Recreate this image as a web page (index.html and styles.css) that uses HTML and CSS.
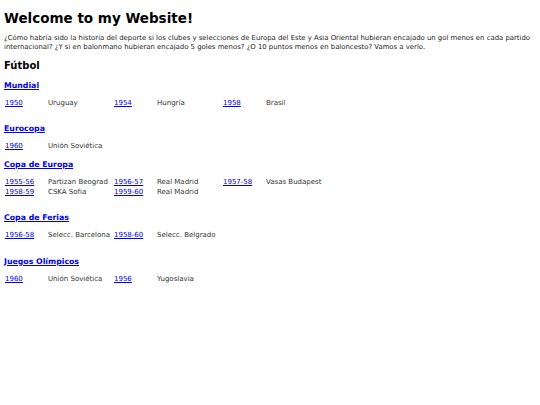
FILE: index.html
```html
<!DOCTYPE html>
<html lang="es">
<head>
<meta charset="utf-8">
<title>Welcome to my Website!</title>
<link rel="stylesheet" href="styles.css">
</head>
<body>
<h1 class="title">Welcome to my Website!</h1>
<p class="intro">¿Cómo habría sido la historia del deporte si los clubes y selecciones de Europa del Este y Asia Oriental hubieran encajado un gol menos en cada partido internacional? ¿Y si en balonmano hubieran encajado 5 goles menos? ¿O 10 puntos menos en baloncesto? Vamos a verlo.</p>
<h2 class="sport">Fútbol</h2>

<section class="comp">
  <h3 class="comp-title"><a href="#">Mundial</a></h3>
  <table class="results">
    <colgroup><col class="c-year"><col class="c-team"><col class="c-year"><col class="c-team"><col class="c-year"><col class="c-team"></colgroup>
    <tr><td class="year"><a href="#">1950</a></td><td>Uruguay</td><td class="year"><a href="#">1954</a></td><td>Hungría</td><td class="year"><a href="#">1958</a></td><td>Brasil</td></tr>
  </table>
</section>

<section class="comp compact">
  <h3 class="comp-title"><a href="#">Eurocopa</a></h3>
  <table class="results">
    <colgroup><col class="c-year"><col class="c-team"><col class="c-year"><col class="c-team"><col class="c-year"><col class="c-team"></colgroup>
    <tr><td class="year"><a href="#">1960</a></td><td>Unión Soviética</td><td class="year"></td><td></td><td class="year"></td><td></td></tr>
  </table>
</section>

<section class="comp">
  <h3 class="comp-title"><a href="#">Copa de Europa</a></h3>
  <table class="results">
    <colgroup><col class="c-year"><col class="c-team"><col class="c-year"><col class="c-team"><col class="c-year"><col class="c-team"></colgroup>
    <tr><td class="year"><a href="#">1955-56</a></td><td>Partizan Beograd</td><td class="year"><a href="#">1956-57</a></td><td>Real Madrid</td><td class="year"><a href="#">1957-58</a></td><td>Vasas Budapest</td></tr>
    <tr><td class="year"><a href="#">1958-59</a></td><td>CSKA Sofia</td><td class="year"><a href="#">1959-60</a></td><td>Real Madrid</td><td class="year"></td><td></td></tr>
  </table>
</section>

<section class="comp">
  <h3 class="comp-title"><a href="#">Copa de Ferias</a></h3>
  <table class="results">
    <colgroup><col class="c-year"><col class="c-team"><col class="c-year"><col class="c-team"><col class="c-year"><col class="c-team"></colgroup>
    <tr><td class="year"><a href="#">1956-58</a></td><td>Selecc. Barcelona</td><td class="year"><a href="#">1958-60</a></td><td>Selecc. Belgrado</td><td class="year"></td><td></td></tr>
  </table>
</section>

<section class="comp">
  <h3 class="comp-title"><a href="#">Juegos Olímpicos</a></h3>
  <table class="results">
    <colgroup><col class="c-year"><col class="c-team"><col class="c-year"><col class="c-team"><col class="c-year"><col class="c-team"></colgroup>
    <tr><td class="year"><a href="#">1960</a></td><td>Unión Soviética</td><td class="year"><a href="#">1956</a></td><td>Yugoslavia</td><td class="year"></td><td></td></tr>
  </table>
</section>
</body>
</html>
```

FILE: styles.css
```css
html, body {
  background: #fff;
}
body {
  margin: 0;
  padding: 7px 4px;
  font-family: "DejaVu Sans", Verdana, sans-serif;
  color: #000;
}
a {
  color: #0000ee;
}
.title {
  margin: 0 0 5px;
  font-size: 13.5px;
  line-height: 22px;
  font-weight: bold;
}
.intro {
  margin: 0 0 6px;
  font-size: 6.9px;
  line-height: 9px;
  color: #222;
}
.sport {
  margin: 0 0 5.5px;
  font-size: 10px;
  line-height: 16px;
  font-weight: bold;
}
.comp {
  margin-bottom: 15.5px;
}
.comp.compact {
  margin-bottom: 7.5px;
}
.comp-title {
  margin: 0 0 7px;
  font-size: 7.8px;
  line-height: 11px;
  font-weight: bold;
}
.results {
  border-collapse: collapse;
  table-layout: fixed;
  width: 327px;
  font-size: 7px;
  line-height: 10px;
  color: #333;
}
.results td {
  padding: 0;
  white-space: nowrap;
  overflow: visible;
}
.results td.year {
  padding-left: 1px;
}
.c-year {
  width: 44px;
}
.c-team {
  width: 65px;
}
```
